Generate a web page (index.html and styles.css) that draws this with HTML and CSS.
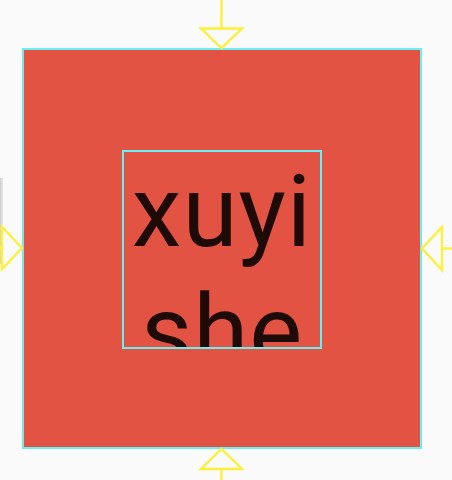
FILE: index.html
```html
<!DOCTYPE html>
<html>
<head>
<meta charset="utf-8">
<link rel="stylesheet" href="styles.css">
</head>
<body>
<div class="stage">
  <div class="edge-shadow"></div>
  <div class="outer">
    <div class="inner">
      <p class="label">xuyi she</p>
    </div>
  </div>
  <svg class="markers" width="452" height="480" viewBox="0 0 452 480">
    <g fill="none" stroke="#fdf03a" stroke-width="2.4" stroke-linejoin="miter">
      <line x1="221.5" y1="0" x2="221.5" y2="28.5"/>
      <polygon points="201,28.5 242,28.5 221.5,48"/>
      <line x1="221.5" y1="469" x2="221.5" y2="480"/>
      <polygon points="201,469 242,469 221.5,449"/>
      <polygon points="2,227 2,269 22,248"/>
      <line x1="0" y1="248" x2="2" y2="248"/>
      <polygon points="442,227 442,270 422,248.5"/>
      <line x1="442" y1="248.5" x2="452" y2="248.5"/>
    </g>
  </svg>
</div>
</body>
</html>
```
FILE: styles.css
```css
html, body {
  margin: 0;
  padding: 0;
  background: #fafafa;
}
.stage {
  position: relative;
  width: 452px;
  height: 480px;
  overflow: hidden;
  padding: 48px 0 0 22px;
  box-sizing: border-box;
}
.outer {
  width: 400px;
  height: 401px;
  box-sizing: border-box;
  border: 2px solid #66f0f2;
  background: #e25343;
  display: flex;
  align-items: center;
  justify-content: center;
}
.inner {
  width: 200px;
  height: 199px;
  box-sizing: border-box;
  border: 2px solid #66f0f2;
  overflow: hidden;
  margin-top: 1px;
}
.label {
  margin: 0;
  font-family: Roboto, "Noto Sans", sans-serif;
  font-size: 100px;
  line-height: 120px;
  color: #1e0b08;
  text-align: center;
  letter-spacing: 1px;
}
.edge-shadow {
  position: absolute;
  left: 0;
  top: 178px;
  width: 3px;
  height: 86px;
  background: linear-gradient(to right, #cfcfcf, #e8e8e8);
}
.markers {
  position: absolute;
  left: 0;
  top: 0;
}
```
